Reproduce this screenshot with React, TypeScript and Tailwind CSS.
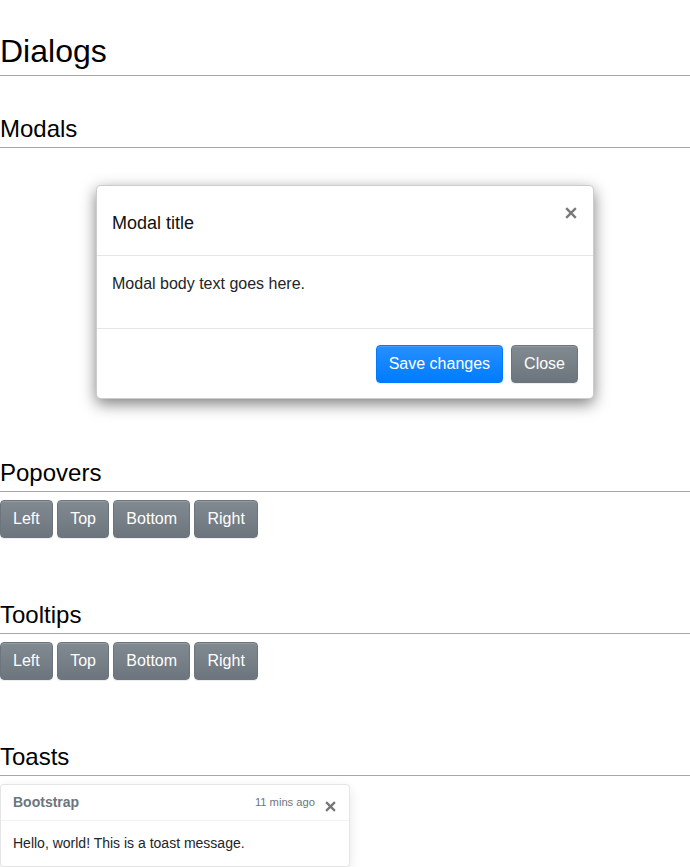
import React from "react";

const secBtn =
  "px-[12px] py-[6px] text-[16px] leading-[24px] text-white rounded-[4px] border border-[#6c757d] bg-[linear-gradient(180deg,#828a91,#6c757d)] shadow-[inset_0_1px_0_rgba(255,255,255,0.15),0_1px_1px_rgba(0,0,0,0.075)]";
const priBtn =
  "px-[12px] py-[6px] text-[16px] leading-[24px] text-white rounded-[4px] border border-[#007bff] bg-[linear-gradient(180deg,#268fff,#007bff)] shadow-[inset_0_1px_0_rgba(255,255,255,0.15),0_1px_1px_rgba(0,0,0,0.075)]";

function X({ size, color }: { size: number; color: string }) {
  return (
    <svg width={size} height={size} viewBox="0 0 12 12" className="block">
      <path d="M1.2 1.2 L10.8 10.8 M10.8 1.2 L1.2 10.8" stroke={color} strokeWidth="2.4" strokeLinecap="butt" />
    </svg>
  );
}

function H4({ children, mt }: { children: React.ReactNode; mt: string }) {
  return (
    <h4 className={`${mt} text-[24px] leading-[29px] pb-[4px] border-b border-[#a7a7a7] text-black font-normal`}>
      {children}
    </h4>
  );
}

function ButtonRow() {
  return (
    <div className="mt-[8px] flex gap-[4.45px]">
      <button className={secBtn}>Left</button>
      <button className={secBtn}>Top</button>
      <button className={secBtn}>Bottom</button>
      <button className={secBtn}>Right</button>
    </div>
  );
}

export default function App() {
  return (
    <div className="w-[690px] h-[867px] overflow-hidden bg-white font-['Liberation_Sans',Arial,sans-serif] text-[#212529]">
      <div className="h-[32px]" />
      <h1 className="text-[32px] leading-[38px] pb-[5px] border-b border-[#a7a7a7] text-black font-normal">Dialogs</h1>

      <H4 mt="mt-[38px]">Modals</H4>

      <div className="mt-[37px] mx-auto w-[498px] bg-white border border-[rgba(0,0,0,0.2)] rounded-[5px] shadow-[0_5px_15px_rgba(0,0,0,0.5)]">
        <div className="flex h-[70px] px-[15px] border-b border-[#e5e5e5]">
          <div className="mt-[24px] text-[18px] leading-[26px] text-[#111]">Modal title</div>
          <button className="ml-auto mr-[1px] mt-[20.5px] self-start">
            <X size={12} color="#7a7a7a" />
          </button>
        </div>
        <div className="px-[15px] pt-[16px] pb-[32px] text-[16px] leading-[24px]">Modal body text goes here.</div>
        <div className="flex justify-end gap-[8px] px-[15px] pt-[16px] pb-[15px] border-t border-[#e5e5e5]">
          <button className={priBtn}>Save changes</button>
          <button className={secBtn}>Close</button>
        </div>
      </div>

      <H4 mt="mt-[59px]">Popovers</H4>
      <ButtonRow />

      <H4 mt="mt-[62px]">Tooltips</H4>
      <ButtonRow />

      <H4 mt="mt-[62px]">Toasts</H4>
      <div className="mt-[8px] w-[350px] text-[14px] bg-[rgba(255,255,255,0.85)] border border-[rgba(0,0,0,0.1)] rounded-[4px] shadow-[0_4px_12px_rgba(0,0,0,0.1)]">
        <div className="flex items-center h-[36px] px-[12px] border-b border-[rgba(0,0,0,0.05)] text-[#6c757d]">
          <strong className="mr-auto font-bold leading-[21px]">Bootstrap</strong>
          <small className="text-[11.2px] leading-[17px]">11 mins ago</small>
          <button className="ml-[10px] mr-[1px] mt-[7px]">
            <X size={11} color="#767676" />
          </button>
        </div>
        <div className="p-[12px] leading-[21px]">Hello, world! This is a toast message.</div>
      </div>
    </div>
  );
}
